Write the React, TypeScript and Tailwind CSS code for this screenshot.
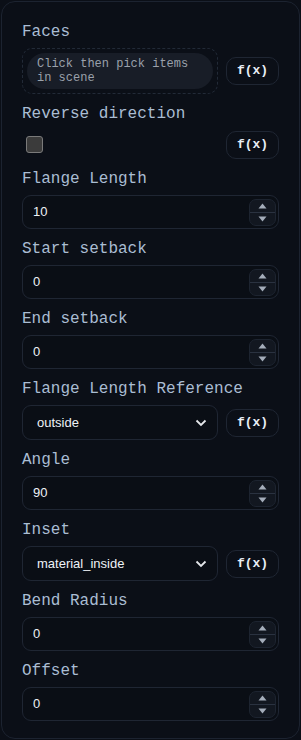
import React from "react";

const mono = "font-['Liberation_Mono','DejaVu_Sans_Mono',monospace]";
const sans = "font-['Liberation_Sans',Arial,sans-serif]";

const FxButton = () => (
  <button
    className={`${mono} h-[28px] w-[53px] shrink-0 rounded-[10px] border border-[#1f2633] bg-[#0b0f17] text-[13px] font-bold text-[#e8eef6]`}
  >
    f(x)
  </button>
);

const Label = ({ children }: { children: React.ReactNode }) => (
  <div className={`${mono} mb-1.5 text-[16px] leading-5 text-[#aabdd3]`}>{children}</div>
);

const Spinner = () => (
  <div className="mr-[2px] flex h-[27px] w-[27px] flex-col rounded-[7px] border border-[#1d2430] bg-[#121720]">
    <div className="flex flex-1 items-center justify-center">
      <svg width="9" height="6" viewBox="0 0 9 6">
        <path d="M4.5 0.5 L8.5 5.5 L0.5 5.5 Z" fill="#a4adba" />
      </svg>
    </div>
    <div className="h-px bg-[#2a3240]" />
    <div className="flex flex-1 items-center justify-center">
      <svg width="9" height="6" viewBox="0 0 9 6">
        <path d="M0.5 0.5 L8.5 0.5 L4.5 5.5 Z" fill="#a4adba" />
      </svg>
    </div>
  </div>
);

const NumberField = ({ label, value }: { label: string; value: string }) => (
  <div>
    <Label>{label}</Label>
    <div className="flex h-[34px] items-center rounded-[9px] border border-[#1f2633] bg-[#0a0e15]">
      <input
        type="text"
        defaultValue={value}
        className={`${sans} min-w-0 flex-1 bg-transparent pl-[10px] pr-2.5 text-[13px] text-[#eef2f7] outline-none`}
      />
      <Spinner />
    </div>
  </div>
);

const SelectField = ({ label, value }: { label: string; value: string }) => (
  <div>
    <Label>{label}</Label>
    <div className="flex items-center gap-2">
      <div className="flex h-[35px] flex-1 items-center rounded-[9px] border border-[#1f2633] bg-[#0a0e15] pl-[14px] pr-[10px]">
        <span className={`${sans} flex-1 text-[13px] text-[#eef2f7]`}>{value}</span>
        <svg width="12" height="8" viewBox="0 0 12 8">
          <path d="M1.5 1.5 L6 6 L10.5 1.5" stroke="#e5e7eb" strokeWidth="1.8" fill="none" />
        </svg>
      </div>
      <FxButton />
    </div>
  </div>
);

export default function App() {
  return (
    <div className="bg-[#0b0f17] p-px">
      <div className="flex h-[738px] w-[299px] flex-col gap-2.5 rounded-[14px] border border-[#1c2330] bg-[#0b0f17] px-5 pt-5">
        <div>
          <Label>Faces</Label>
          <div className="flex items-center gap-2">
            <div className="flex-1 rounded-[10px] border border-dashed border-[#222a37] p-1">
              <div
                className={`${mono} flex h-[36px] items-center rounded-full bg-[#181d27] px-2.5 text-[12px] leading-[14px] text-[#9aa1ab]`}
              >
                Click then pick items
                <br />
                in scene
              </div>
            </div>
            <FxButton />
          </div>
        </div>

        <div>
          <Label>Reverse direction</Label>
          <div className="flex h-[29px] items-center justify-between">
            <div className="ml-1 h-[17px] w-[17px] rounded-[3px] border border-[#7a7a7a] bg-[#3b3b3b]" />
            <FxButton />
          </div>
        </div>

        <NumberField label="Flange Length" value="10" />
        <NumberField label="Start setback" value="0" />
        <NumberField label="End setback" value="0" />
        <SelectField label="Flange Length Reference" value="outside" />
        <NumberField label="Angle" value="90" />
        <SelectField label="Inset" value="material_inside" />
        <NumberField label="Bend Radius" value="0" />
        <NumberField label="Offset" value="0" />
      </div>
    </div>
  );
}
